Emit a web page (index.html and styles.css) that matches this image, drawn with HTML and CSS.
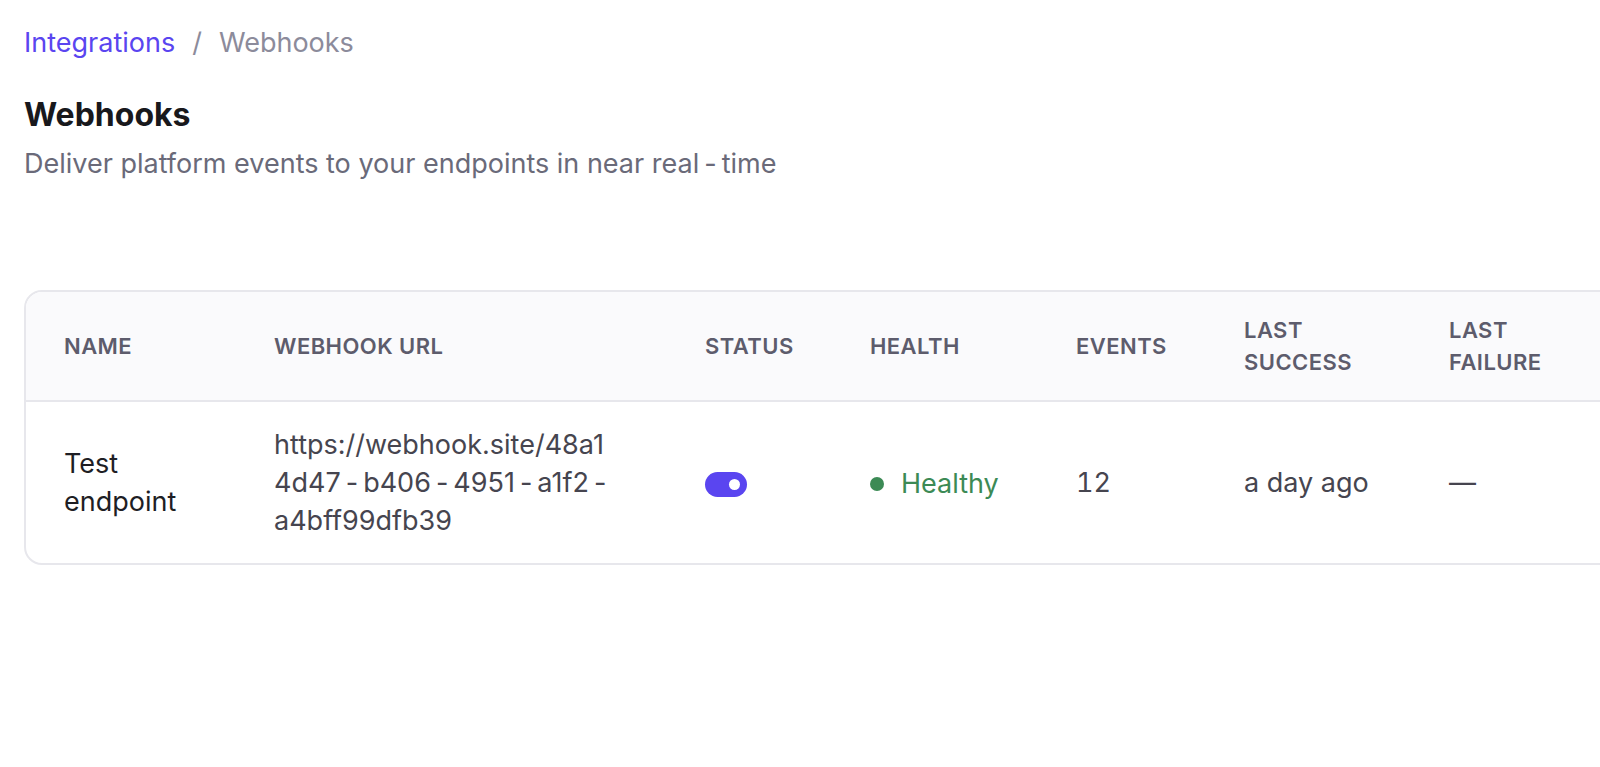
FILE: index.html
```html
<!DOCTYPE html>
<html lang="en">
<head>
    <meta charset="UTF-8">
    <meta name="viewport" content="width=device-width, initial-scale=1.0">
    <title>Webhooks</title>
    <link rel="stylesheet" href="styles.css">
</head>
<body>
    <div class="page">
        <nav class="breadcrumb">
            <a href="#" class="crumb-link">Integrations</a>
            <span class="crumb-sep">/</span>
            <span class="crumb-current">Webhooks</span>
        </nav>

        <header class="page-header">
            <h1>Webhooks</h1>
            <p class="subtitle">Deliver platform events to your endpoints in near real<span class="hy">-</span>time</p>
        </header>

        <div class="table-scroll">
            <div class="table-card">
                <table class="webhooks">
                    <colgroup>
                        <col class="col-name">
                        <col class="col-url">
                        <col class="col-status">
                        <col class="col-health">
                        <col class="col-events">
                        <col class="col-success">
                        <col class="col-failure">
                        <col>
                    </colgroup>
                    <thead>
                        <tr>
                            <th>Name</th>
                            <th>Webhook URL</th>
                            <th>Status</th>
                            <th>Health</th>
                            <th>Events</th>
                            <th>Last<br>Success</th>
                            <th>Last<br>Failure</th>
                            <th></th>
                        </tr>
                    </thead>
                    <tbody>
                        <tr>
                            <td class="name">Test<br>endpoint</td>
                            <td class="url">https://webhook.site/48a1<br>4d47<span class="hy">-</span>b406<span class="hy">-</span>4951<span class="hy">-</span>a1f2<span class="hy">-</span><br>a4bff99dfb39</td>
                            <td><span class="toggle on"><span class="knob"></span></span></td>
                            <td><span class="health ok"><span class="dot"></span>Healthy</span></td>
                            <td class="muted num">12</td>
                            <td class="muted">a day ago</td>
                            <td class="muted">—</td>
                            <td></td>
                        </tr>
                    </tbody>
                </table>
            </div>
        </div>
    </div>
</body>
</html>
```

FILE: styles.css
```css
html, body {
    margin: 0;
    padding: 0;
    background: #ffffff;
}

body {
    font-family: Inter, "Noto Sans", sans-serif;
    color: #1a1a1f;
}

.page {
    padding: 25px 0 0 24px;
    overflow: hidden;
}

/* hyphens render with a bit of air around them */
.hy {
    padding: 0 5px;
}

/* breadcrumb */
.breadcrumb {
    font-size: 27px;
    line-height: 36px;
    display: flex;
    gap: 17px;
}

.crumb-link {
    color: #5a45f0;
    text-decoration: none;
}

.crumb-sep,
.crumb-current {
    color: #8c8b9b;
}

/* title block */
.page-header {
    margin-top: 34px;
}

.page-header h1 {
    margin: 0;
    font-size: 32px;
    line-height: 40px;
    font-weight: 700;
    color: #18181c;
}

.subtitle {
    margin: 11px 0 0;
    font-size: 27px;
    line-height: 36px;
    color: #6a6a79;
}

/* table */
.table-scroll {
    margin-top: 108px;
    overflow: hidden;
}

.table-card {
    width: 1700px;
    border: 2px solid #e7e7ec;
    border-radius: 18px;
    overflow: hidden;
}

.webhooks {
    width: 100%;
    table-layout: fixed;
    border-collapse: collapse;
}

.col-name { width: 248px; }
.col-url { width: 431px; }
.col-status { width: 165px; }
.col-health { width: 206px; }
.col-events { width: 168px; }
.col-success { width: 205px; }
.col-failure { width: 200px; }

.webhooks th {
    background: #fafafc;
    text-align: left;
    font-size: 22px;
    line-height: 32px;
    font-weight: 600;
    letter-spacing: 0.45px;
    text-transform: uppercase;
    color: #5d5c6c;
    padding: 22px 0;
    border-bottom: 2px solid #e7e7ec;
    vertical-align: middle;
}

.webhooks td {
    font-size: 27px;
    line-height: 38px;
    color: #1e1e24;
    padding: 24px 0 23px;
    vertical-align: middle;
}

.webhooks th:first-child,
.webhooks td:first-child {
    padding-left: 38px;
}

.webhooks td.url,
.webhooks td.muted {
    color: #46454f;
}

.webhooks td.num {
    font-variant-numeric: tabular-nums;
}

/* status toggle */
.toggle {
    display: inline-flex;
    align-items: center;
    justify-content: flex-end;
    width: 42px;
    height: 25px;
    border-radius: 13px;
    background: #5a45f0;
    padding: 0 7px;
    box-sizing: border-box;
    vertical-align: middle;
}

.knob {
    width: 11px;
    height: 11px;
    border-radius: 50%;
    background: #ffffff;
}

/* health */
.health {
    display: inline-flex;
    align-items: center;
    gap: 17px;
}

.health.ok {
    color: #3c8a55;
}

.dot {
    width: 14px;
    height: 14px;
    border-radius: 50%;
    background: #3c8a55;
}
```
